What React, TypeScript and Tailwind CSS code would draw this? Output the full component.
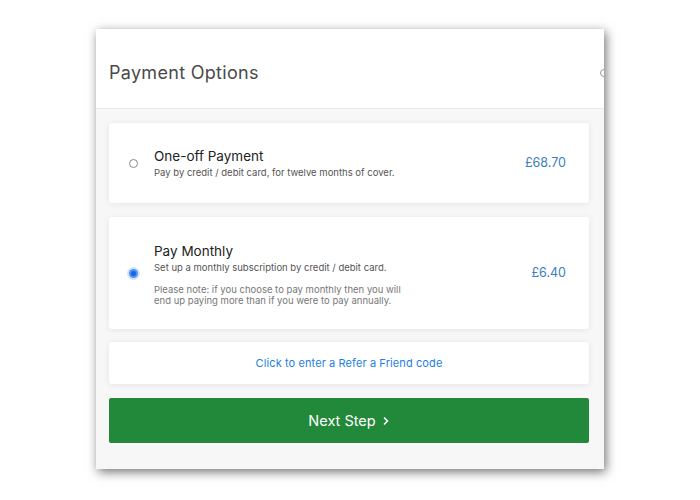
import React from 'react';

type Option = {
  id: string;
  title: string;
  desc: string;
  note?: string;
  price: string;
};

const OPTIONS: Option[] = [
  {
    id: 'once',
    title: 'One-off Payment',
    desc: 'Pay by credit / debit card, for twelve months of cover.',
    price: '£68.70',
  },
  {
    id: 'monthly',
    title: 'Pay Monthly',
    desc: 'Set up a monthly subscription by credit / debit card.',
    note: 'Please note: if you choose to pay monthly then you will end up paying more than if you were to pay annually.',
    price: '£6.40',
  },
];

function Radio({ on }: { on: boolean }) {
  if (on) {
    return (
      <span className="w-[9px] h-[9px] rounded-full bg-[#4f93f3] ring-[2px] ring-[#d3e4fd] flex items-center justify-center">
        <span className="w-[5px] h-[5px] rounded-full bg-[#1a66e0]" />
      </span>
    );
  }
  return <span className="w-[9px] h-[9px] rounded-full border border-[#8a8a8a] bg-white" />;
}

export default function App() {
  const [sel, setSel] = React.useState('monthly');

  return (
    <div className="w-[700px] h-[500px] bg-white pt-[29px] pl-[96px]" style={{ fontFamily: 'Inter, "Open Sans", sans-serif' }}>
      <div className="w-[508px] h-[440px] bg-[#f7f7f7] shadow-[2px_3px_10px_rgba(0,0,0,0.55)] flex flex-col overflow-hidden">
        {/* header */}
        <div className="h-[80px] bg-white border-b border-[#ebebeb] flex items-center justify-between pl-[13px] pt-[7px]">
          <div className="text-[18px] text-[#4a4a4a] tracking-[0.3px]">Payment Options</div>
          <span className="w-[8px] h-[8px] rounded-full border border-[#999] mr-[-4px] mt-[2px]" />
        </div>

        <div className="flex flex-col gap-[14px] pt-[14px] px-[13px] pr-[15px]">
          {OPTIONS.map((o) => (
            <div
              key={o.id}
              onClick={() => setSel(o.id)}
              className={`bg-white rounded-[3px] shadow-[0_1px_6px_rgba(0,0,0,0.08)] flex items-center pl-[20px] pr-[23px] cursor-pointer ${o.note ? 'h-[112px]' : 'h-[80px]'}`}
            >
              <div className="w-[9px] flex justify-center">
                <Radio on={sel === o.id} />
              </div>
              <div className="ml-[16px] flex-1 pt-[1px]">
                <div className="text-[13.5px] text-[#222] leading-[18px]">{o.title}</div>
                <div className="text-[9.5px] text-[#555] mt-[1px] leading-[14px]">{o.desc}</div>
                {o.note && (
                  <div className="text-[9.5px] text-[#777] leading-[11px] mt-[9px] w-[265px]">{o.note}</div>
                )}
              </div>
              <div className="text-[12.5px] text-[#3a7ebf] pt-[1px]">{o.price}</div>
            </div>
          ))}

          <div className="h-[42px] -mt-[1px] bg-white rounded-[3px] shadow-[0_1px_6px_rgba(0,0,0,0.08)] flex items-center justify-center">
            <span className="text-[11px] text-[#1e7fe0] tracking-[0.1px]">Click to enter a Refer a Friend code</span>
          </div>

          <button className="h-[45px] bg-[#22883a] rounded-[2px] text-white text-[14.5px] flex items-center justify-center gap-[6px]">
            Next Step
            <svg width="8" height="10" viewBox="0 0 8 10" fill="none" stroke="white" strokeWidth="1.6">
              <path d="M2 1.5 L5.5 5 L2 8.5" />
            </svg>
          </button>
        </div>
      </div>
    </div>
  );
}
